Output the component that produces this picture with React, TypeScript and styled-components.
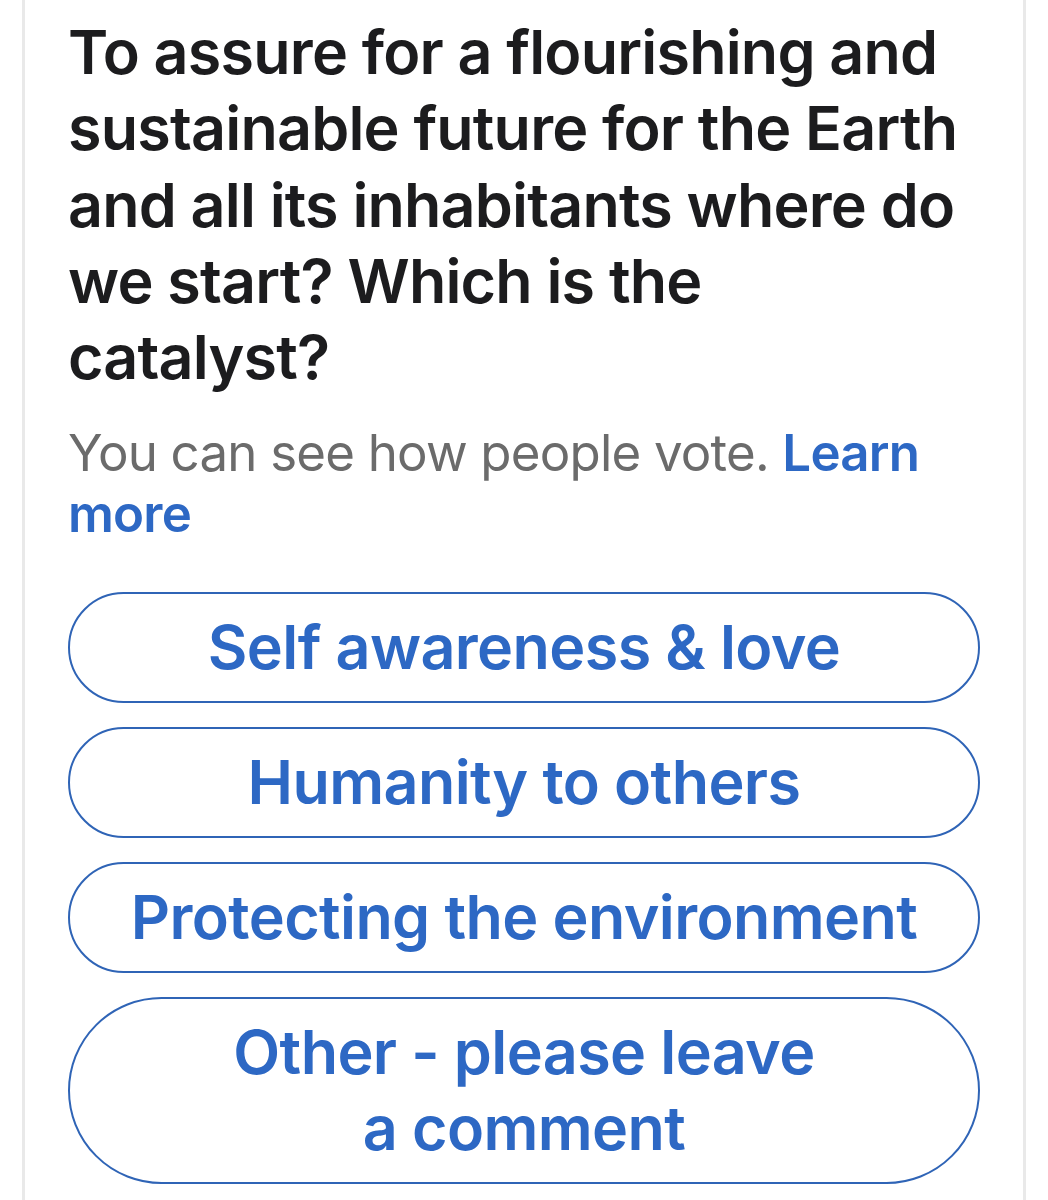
import React from "react";
import styled, { createGlobalStyle } from "styled-components";

const GlobalStyle = createGlobalStyle`
  html, body {
    margin: 0;
    padding: 0;
    background: #ffffff;
  }
  body {
    font-family: Inter, "Noto Sans", "Liberation Sans", sans-serif;
    -webkit-font-smoothing: antialiased;
  }
`;

// line breaks in the last label follow the original poll
const OPTIONS = [
  "Self awareness & love",
  "Humanity to others",
  "Protecting the environment",
  "Other - please leave\na comment",
];

const App: React.FC = () => {
  return (
    <>
      <GlobalStyle />
      <Page>
        <PollCard>
          <Question>
            To assure for a flourishing and sustainable future for the Earth
            and all its inhabitants where do we start? Which is the catalyst?
          </Question>
          <Visibility>
            You can see how people vote. <LearnMore href="#">Learn more</LearnMore>
          </Visibility>
          <OptionList>
            {OPTIONS.map((label) => (
              <OptionButton key={label} type="button">
                {label}
              </OptionButton>
            ))}
          </OptionList>
        </PollCard>
      </Page>
    </>
  );
};

export default App;

const Page = styled.div`
  width: 1048px;
  min-height: 1200px;
  overflow: hidden;
`;

const PollCard = styled.section`
  margin-left: 22px;
  width: 1004px;
  min-height: 1200px;
  box-sizing: border-box;
  border-left: 3px solid #e9e9e9;
  border-right: 3px solid #e9e9e9;
  padding: 14px 43px 0 43px;
`;

const Question = styled.h2`
  margin: 0;
  max-width: 900px;
  font-size: 61px;
  line-height: 76.25px;
  font-weight: 600;
  color: #1c1c1e;
  letter-spacing: -0.8px;
`;

const Visibility = styled.p`
  margin: 27px 0 0;
  font-size: 51px;
  line-height: 61px;
  font-weight: 400;
  color: #6b6b6b;
  letter-spacing: -0.8px;
`;

const LearnMore = styled.a`
  color: #2d68c4;
  font-weight: 600;
  text-decoration: none;
`;

const OptionList = styled.div`
  margin-top: 48px;
  display: flex;
  flex-direction: column;
  gap: 24px;
`;

const OptionButton = styled.button`
  width: 100%;
  box-sizing: border-box;
  padding: 15px 20px 16px;
  border: 2.5px solid #2f64b6;
  border-radius: 999px;
  background: #ffffff;
  color: #2d68c4;
  font-family: inherit;
  font-size: 61px;
  line-height: 76px;
  font-weight: 600;
  letter-spacing: -0.6px;
  white-space: pre-line;
  text-align: center;
  cursor: pointer;
`;
